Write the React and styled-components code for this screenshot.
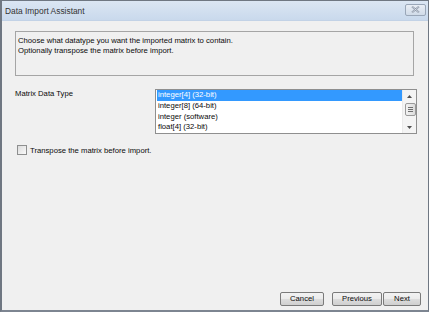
import React from "react";
import styled, { createGlobalStyle } from "styled-components";

const Global = createGlobalStyle`
  html, body { margin: 0; padding: 0; background: #ffffff; }
  body { font-family: "Liberation Sans", Arial, sans-serif; }
  * { box-sizing: border-box; }
`;

const Window = styled.div`
  width: 429px;
  height: 312px;
  display: flex;
  flex-direction: column;
  border: 1px solid #6f7782;
  border-left: 2px solid #6f7782;
  border-bottom: 2px solid #7d8591;
  background: #f0f0f0;
  font-family: "Liberation Sans", Arial, sans-serif;
  font-size: 7.7px;
  color: #0a0a0a;
`;

const TitleBar = styled.div`
  height: 20px;
  flex: none;
  display: flex;
  align-items: center;
  justify-content: space-between;
  padding: 0 2px 0 3px;
  background: linear-gradient(#dbe6f3, #c9d9ec);
  border-bottom: 1px solid #c2d2e6;
`;

const Title = styled.span`
  font-size: 8.4px;
  color: #333;
`;

const CloseButton = styled.div`
  width: 21px;
  height: 12px;
  margin-top: -2px;
  display: flex;
  align-items: center;
  justify-content: center;
  border: 1px solid #9aa7b8;
  border-radius: 2px;
  background: linear-gradient(#e9eef5, #d0dbe8);
`;

const Body = styled.div`
  flex: 1;
  display: flex;
  flex-direction: column;
  padding: 10px 13px 2px 13px;
`;

const InfoBox = styled.div`
  height: 45px;
  margin-right: 1px;
  border: 1px solid #a5a5a5;
  padding: 4px 2px;
  line-height: 10px;
`;

const TypeRow = styled.div`
  display: flex;
  margin-top: 13px;
`;

const FieldLabel = styled.div`
  width: 140px;
  line-height: 10px;
`;

const ListBox = styled.div`
  width: 262px;
  height: 45px;
  margin-right: -2px;
  border: 1px solid #8f8f8f;
  background: #ffffff;
  display: flex;
  overflow: hidden;
`;

const Items = styled.div`
  flex: 1;
  padding-left: 1px;
`;

const Item = styled.div`
  height: 10.75px;
  line-height: 10.75px;
  padding-left: 1px;
  color: ${(p) => (p.$selected ? "#ffffff" : "#0a0a0a")};
  background: ${(p) => (p.$selected ? "#3399ff" : "transparent")};
`;

const ScrollBar = styled.div`
  width: 14px;
  display: flex;
  flex-direction: column;
  align-items: center;
  background: #f4f4f4;
  border-left: 1px solid #eaeaea;
`;

const Arrow = styled.div`
  height: 12px;
  width: 100%;
  display: flex;
  align-items: center;
  justify-content: center;
`;

const Track = styled.div`
  flex: 1;
  width: 100%;
  padding: 1px 1px;
`;

const Thumb = styled.div`
  height: 13px;
  width: 11px;
  margin-left: 1px;
  border: 1px solid #9a9a9a;
  border-radius: 2px;
  background: linear-gradient(90deg, #f2f2f2, #dcdcdc);
  display: flex;
  flex-direction: column;
  align-items: center;
  justify-content: center;
  gap: 1px;
`;

const Grip = styled.div`
  width: 5px;
  height: 1px;
  background: #6f6f6f;
`;

const CheckRow = styled.label`
  display: flex;
  align-items: center;
  gap: 3px;
  margin-top: 11px;
  margin-left: 2px;
`;

const CheckBox = styled.span`
  width: 10px;
  height: 10px;
  border: 1px solid #8e8f8f;
  background: linear-gradient(135deg, #dcdcdc, #fafafa);
`;

const Spacer = styled.div`
  flex: 1;
`;

const ButtonRow = styled.div`
  display: flex;
  justify-content: flex-end;
  margin-right: -6px;
  margin-bottom: 2px;
`;

const Button = styled.button`
  width: ${(p) => p.$w}px;
  height: 14px;
  margin-left: ${(p) => p.$gap}px;
  padding: 0;
  border: 1px solid #7a7a7a;
  border-radius: 2px;
  background: linear-gradient(#f2f2f2 0%, #ebebeb 50%, #dddddd 51%, #cfcfcf 100%);
  font-family: "Liberation Sans", Arial, sans-serif;
  font-size: 7.7px;
  color: #0a0a0a;
  line-height: 12px;
`;

export default function App() {
  return (
    <>
      <Global />
      <Window>
        <TitleBar>
          <Title>Data Import Assistant</Title>
          <CloseButton>
            <svg width="9" height="7" viewBox="0 0 9 7">
              <path d="M1 0.5 L8 6.5 M8 0.5 L1 6.5" stroke="#8a96a6" strokeWidth="1.8" />
              <path d="M1 0.5 L8 6.5 M8 0.5 L1 6.5" stroke="#eef2f7" strokeWidth="0.6" />
            </svg>
          </CloseButton>
        </TitleBar>
        <Body>
          <InfoBox>
            Choose what datatype you want the imported matrix to contain.
            <br />
            Optionally transpose the matrix before import.
          </InfoBox>
          <TypeRow>
            <FieldLabel>Matrix Data Type</FieldLabel>
            <ListBox>
              <Items>
                <Item $selected>integer[4] (32-bit)</Item>
                <Item>integer[8] (64-bit)</Item>
                <Item>integer (software)</Item>
                <Item>float[4] (32-bit)</Item>
              </Items>
              <ScrollBar>
                <Arrow>
                  <svg width="5" height="3" viewBox="0 0 5 3">
                    <path d="M0 3 L2.5 0 L5 3 Z" fill="#505050" />
                  </svg>
                </Arrow>
                <Track>
                  <Thumb>
                    <Grip />
                    <Grip />
                    <Grip />
                  </Thumb>
                </Track>
                <Arrow>
                  <svg width="5" height="3" viewBox="0 0 5 3">
                    <path d="M0 0 L2.5 3 L5 0 Z" fill="#505050" />
                  </svg>
                </Arrow>
              </ScrollBar>
            </ListBox>
          </TypeRow>
          <CheckRow>
            <CheckBox />
            Transpose the matrix before import.
          </CheckRow>
          <Spacer />
          <ButtonRow>
            <Button $w={44} $gap={0}>Cancel</Button>
            <Button $w={50} $gap={8}>Previous</Button>
            <Button $w={38} $gap={1}>Next</Button>
          </ButtonRow>
        </Body>
      </Window>
    </>
  );
}
